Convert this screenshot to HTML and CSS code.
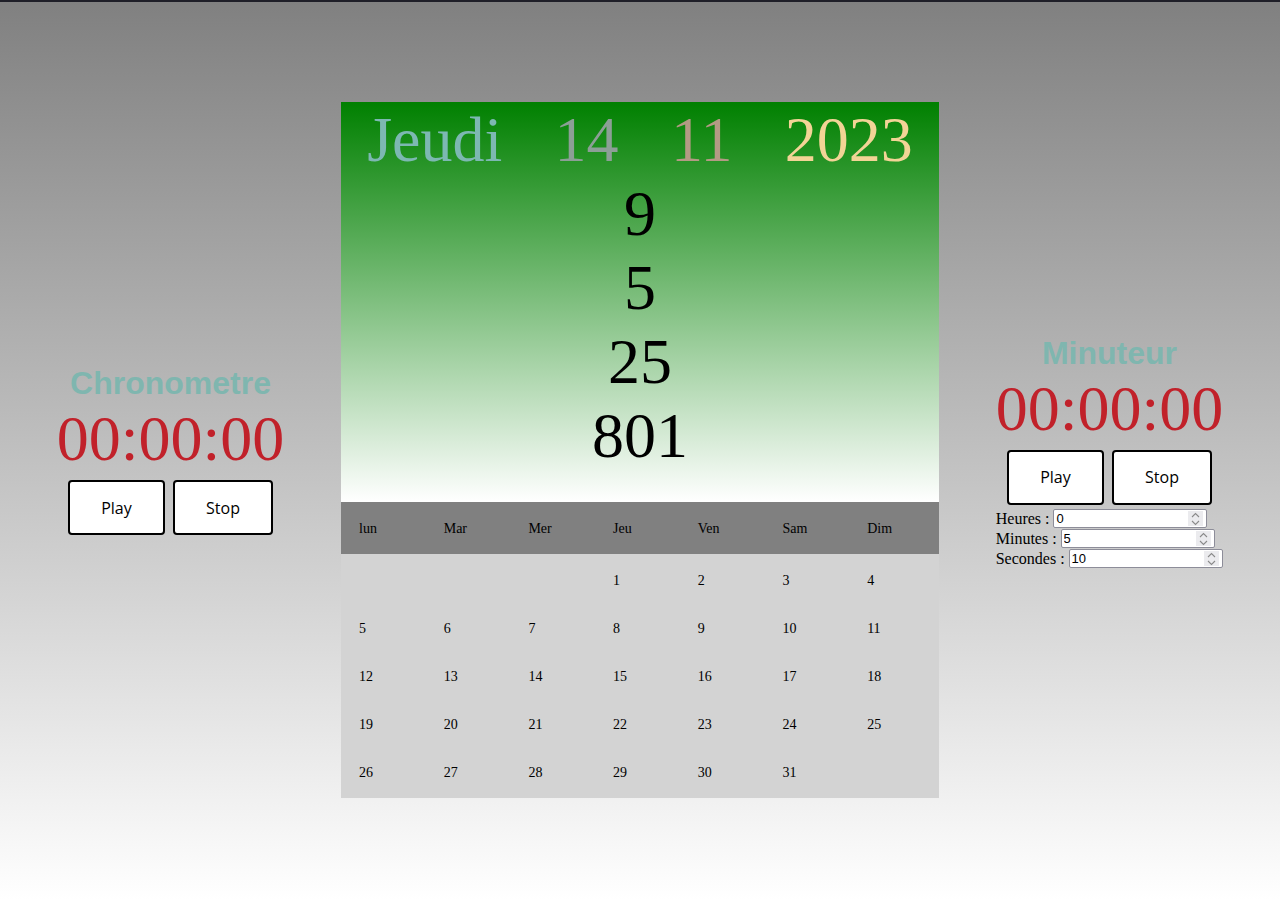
FILE: index.html
```html
<!DOCTYPE html>
<html lang="fr">
<head>
<meta charset="utf-8">
<title>Horloge</title>
<link rel="stylesheet" href="styles.css">
</head>
<body>
<main class="page">
  <section class="side">
    <div class="timer">
      <h1 class="timer-title">Chronometre</h1>
      <div class="timer-time">00:00:00</div>
      <div class="timer-buttons">
        <button class="btn btn-play">Play</button>
        <button class="btn btn-stop">Stop</button>
      </div>
    </div>
  </section>

  <section class="clock">
    <div class="clock-top">
      <div class="date-line">
        <span class="d-day">Jeudi</span>
        <span class="d-num">14</span>
        <span class="d-month">11</span>
        <span class="d-year">2023</span>
      </div>
      <div class="t-line">9</div>
      <div class="t-line">5</div>
      <div class="t-line">25</div>
      <div class="t-line">801</div>
    </div>
    <div class="cal">
      <div class="cal-head">
        <span>lun</span><span>Mar</span><span>Mer</span><span>Jeu</span><span>Ven</span><span>Sam</span><span>Dim</span>
      </div>
      <div class="cal-body">
        <span></span><span></span><span></span><span>1</span><span>2</span><span>3</span><span>4</span>
        <span>5</span><span>6</span><span>7</span><span>8</span><span>9</span><span>10</span><span>11</span>
        <span>12</span><span>13</span><span>14</span><span>15</span><span>16</span><span>17</span><span>18</span>
        <span>19</span><span>20</span><span>21</span><span>22</span><span>23</span><span>24</span><span>25</span>
        <span>26</span><span>27</span><span>28</span><span>29</span><span>30</span><span>31</span><span></span>
      </div>
    </div>
  </section>

  <section class="side">
    <div class="timer timer-right">
      <h1 class="timer-title">Minuteur</h1>
      <div class="timer-time">00:00:00</div>
      <div class="timer-buttons">
        <button class="btn btn-play">Play</button>
        <button class="btn btn-stop">Stop</button>
      </div>
      <div class="fields">
        <label class="field">Heures :
          <span class="num"><input type="number" value="0"><span class="spin"><svg width="9" height="14" viewBox="0 0 9 14"><path d="M1 5 L4.5 1.5 L8 5 M1 9 L4.5 12.5 L8 9" fill="none" stroke="#8a8a8a" stroke-width="1.1"/></svg></span></span>
        </label>
        <label class="field">Minutes :
          <span class="num"><input type="number" value="5"><span class="spin"><svg width="9" height="14" viewBox="0 0 9 14"><path d="M1 5 L4.5 1.5 L8 5 M1 9 L4.5 12.5 L8 9" fill="none" stroke="#8a8a8a" stroke-width="1.1"/></svg></span></span>
        </label>
        <label class="field">Secondes :
          <span class="num"><input type="number" value="10"><span class="spin"><svg width="9" height="14" viewBox="0 0 9 14"><path d="M1 5 L4.5 1.5 L8 5 M1 9 L4.5 12.5 L8 9" fill="none" stroke="#8a8a8a" stroke-width="1.1"/></svg></span></span>
        </label>
      </div>
    </div>
  </section>
</main>
</body>
</html>
```

FILE: styles.css
```css
html, body {
  margin: 0;
  padding: 0;
}

body {
  min-height: 100vh;
  background: linear-gradient(to bottom, #808080 0%, #ffffff 100%);
  border-top: 2px solid #1f1f28;
  box-sizing: border-box;
  font-family: "Liberation Serif", "Times New Roman", serif;
}

.page {
  display: flex;
  align-items: center;
  min-height: 896px;
}

.side {
  flex: 1;
  display: flex;
  justify-content: center;
}

.timer {
  display: flex;
  flex-direction: column;
  align-items: center;
}

.timer-right {
  padding-top: 3px;
}

.timer-title {
  margin: 0;
  font-family: "Liberation Sans", Arial, sans-serif;
  font-size: 32px;
  font-weight: bold;
  color: #7fb6af;
  line-height: 37px;
}

.timer-time {
  font-family: "Liberation Serif", "Times New Roman", serif;
  font-size: 64px;
  line-height: 74px;
  color: #c1212a;
}

.timer-buttons {
  display: flex;
  gap: 8px;
  margin-top: 4px;
}

.btn {
  height: 55px;
  width: 97px;
  background: #ffffff;
  border: 2px solid #000000;
  border-radius: 4px;
  font-family: "Open Sans", "Liberation Sans", sans-serif;
  font-size: 16px;
  color: #000;
  padding: 0;
}

.btn-stop {
  width: 100px;
}

.fields {
  align-self: stretch;
  display: flex;
  flex-direction: column;
  margin-top: 4px;
}

.field {
  display: flex;
  align-items: center;
  height: 20px;
  font-size: 16px;
  gap: 4px;
}

.num {
  position: relative;
  display: block;
  width: 154px;
  height: 19px;
}

.num input {
  width: 154px;
  height: 19px;
  box-sizing: border-box;
  font-family: "Liberation Sans", Arial, sans-serif;
  font-size: 13px;
  border: 1px solid #8d8d99;
  border-radius: 2px;
  padding: 0 2px;
  margin: 0;
  background: #fff;
  -moz-appearance: textfield;
}

.num input::-webkit-inner-spin-button,
.num input::-webkit-outer-spin-button {
  -webkit-appearance: none;
  margin: 0;
}

.spin {
  position: absolute;
  right: 4px;
  top: 2px;
  width: 15px;
  height: 15px;
  background: #ebebee;
  display: flex;
  align-items: center;
  justify-content: center;
}

.clock {
  width: 598px;
  flex: none;
}

.clock-top {
  height: 400px;
  background: linear-gradient(to bottom, #008000 0%, #ffffff 100%);
  font-size: 64px;
  line-height: 74px;
  text-align: center;
  color: #000;
  padding-top: 1px;
  box-sizing: border-box;
}

.date-line {
  display: flex;
  justify-content: space-around;
}

.d-day { color: #7db8b2; }
.d-num { color: #8c9f96; }
.d-month { color: #b39a84; }
.d-year { color: #f2d496; }

.cal {
  font-size: 14px;
}

.cal-head,
.cal-body {
  display: grid;
  grid-template-columns: repeat(7, 84.7px);
}

.cal-head {
  background: #808080;
  height: 52px;
  align-items: center;
}

.cal-body {
  background: #d3d3d3;
  grid-auto-rows: 48px;
  align-items: center;
  padding: 2px 0;
}

.cal-head span,
.cal-body span {
  padding-left: 18px;
  padding-top: 2px;
}
```
